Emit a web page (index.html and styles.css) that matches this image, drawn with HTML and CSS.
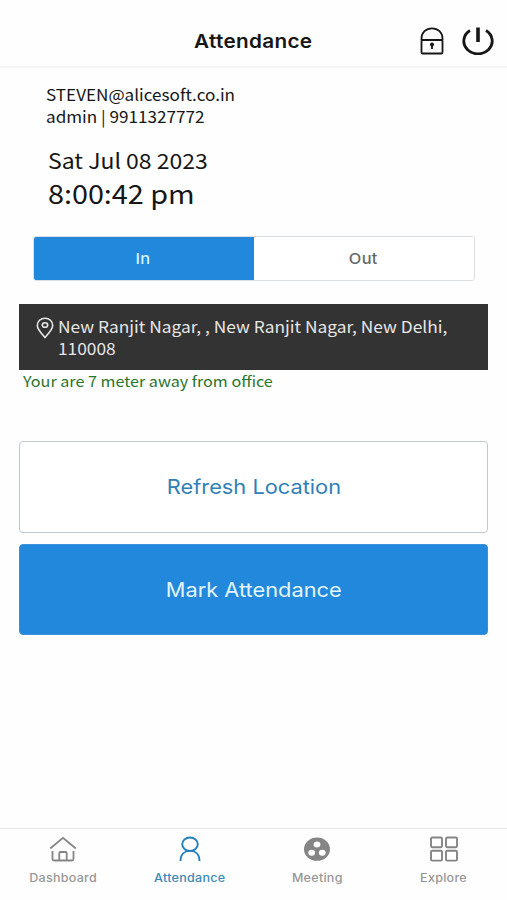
FILE: index.html
```html
<!DOCTYPE html>
<html lang="en">
<head>
  <meta charset="UTF-8">
  <meta name="viewport" content="width=device-width, initial-scale=1.0">
  <title>Attendance</title>
  <link rel="stylesheet" href="styles.css">
</head>
<body>
  <header class="topbar">
    <h1>Attendance</h1>
    <div class="actions">
      <svg class="lock" viewBox="0 0 24 28" fill="none" stroke="#161616" stroke-width="1.8">
        <path d="M1.5 13V11.5C1.5 5.5 6 1.3 12 1.3S22.5 5.5 22.5 11.5V13"/>
        <rect x="1.5" y="13" width="21" height="13.5" rx="1"/>
        <circle cx="12" cy="17.5" r="2" fill="#161616" stroke="none"/>
        <path d="M12 17.5V22"/>
      </svg>
      <svg class="power" viewBox="0 0 32 28" fill="none" stroke="#161616" stroke-width="2.8">
        <path d="M8 3.5A14.2 12.8 0 1 0 24 3.5"/>
        <path d="M16 0.5V15" stroke-width="3.6"/>
      </svg>
    </div>
  </header>

  <main>
    <div class="user">
      <p>STEVEN@alicesoft.co.in</p>
      <p>admin | 9911327772</p>
    </div>
    <p class="date">Sat Jul 08 2023</p>
    <p class="time">8:00:42 pm</p>

    <div class="segment">
      <button class="active"><span>In</span></button>
      <button><span>Out</span></button>
    </div>

    <div class="location">
      <svg class="pin" viewBox="0 0 18 22" fill="none" stroke="#e6e6e6" stroke-width="1.6">
        <path d="M9 20.5C6 17 1.3 12.5 1.3 8.5C1.3 4.3 4.6 1.2 9 1.2S16.7 4.3 16.7 8.5C16.7 12.5 12 17 9 20.5Z"/>
        <ellipse cx="9" cy="8" rx="2.7" ry="2.3"/>
      </svg>
      <p>New Ranjit Nagar, , New Ranjit Nagar, New Delhi, 110008</p>
    </div>
    <p class="distance">Your are 7 meter away from office</p>

    <button class="btn outline"><span>Refresh Location</span></button>
    <button class="btn solid"><span>Mark Attendance</span></button>
  </main>

  <nav class="tabs">
    <a class="tab">
      <svg viewBox="0 0 28 26" fill="none" stroke="#858585" stroke-width="1.8">
        <path d="M1.2 12.5L14 1.8L26.8 12.5"/>
        <path d="M3.5 15V23Q3.5 24.5 5 24.5H23Q24.5 24.5 24.5 23V15M10.3 24.5V17Q10.3 16 11.3 16H16.7Q17.7 16 17.7 17V24.5"/>
      </svg>
      <span>Dashboard</span>
    </a>
    <a class="tab current">
      <svg viewBox="0 0 28 26" fill="none" stroke="#2580bd" stroke-width="1.9">
        <ellipse cx="14" cy="8.2" rx="7.8" ry="6.7"/>
        <path d="M4.5 25C4.5 18.5 8.5 14.9 14 14.9S23.5 18.5 23.5 25"/>
      </svg>
      <span>Attendance</span>
    </a>
    <a class="tab">
      <svg viewBox="0 0 28 26">
        <ellipse cx="14" cy="13.2" rx="13" ry="11.6" fill="#858585"/>
        <g fill="#fff">
          <ellipse cx="14" cy="8.5" rx="3.4" ry="3"/>
          <ellipse cx="8.7" cy="16.7" rx="3.4" ry="3"/>
          <ellipse cx="19.3" cy="16.7" rx="3.4" ry="3"/>
        </g>
      </svg>
      <span>Meeting</span>
    </a>
    <a class="tab">
      <svg viewBox="0 0 28 26" fill="none" stroke="#858585" stroke-width="1.9">
        <rect x="1" y="1.5" width="11" height="9.8" rx="1.2"/>
        <rect x="16" y="1.5" width="11" height="9.8" rx="1.2"/>
        <rect x="1" y="14.8" width="11" height="9.8" rx="1.2"/>
        <rect x="16" y="14.8" width="11" height="9.8" rx="1.2"/>
      </svg>
      <span>Explore</span>
    </a>
  </nav>
</body>
</html>
```
FILE: styles.css
```css
* {
  box-sizing: border-box;
}
body {
  margin: 0;
  height: 900px;
  display: flex;
  flex-direction: column;
  background: #fefefe;
  color: #161616;
  font-family: "Noto Sans CJK SC", sans-serif;
  overflow: hidden;
}
h1, p {
  margin: 0;
}
button {
  font-family: Inter, sans-serif;
  padding: 0;
}
svg {
  display: block;
}
/* slightly extended lettering */
main p {
  width: fit-content;
  transform: scaleX(1.083);
  transform-origin: left;
}
h1, button span, .tab span {
  display: inline-block;
  transform: scaleX(1.09);
}
.topbar {
  display: grid;
  grid-template-columns: 1fr auto 1fr;
  align-items: center;
  height: 68px;
  padding: 15px 13px 0;
  border-bottom: 2px solid #f5f5f5;
}
.topbar h1 {
  grid-column: 2;
  padding-top: 3px;
  font: 600 19px/24px Inter, sans-serif;
  letter-spacing: 0.3px;
}
.actions {
  display: flex;
  justify-content: flex-end;
  gap: 18px;
}
.lock {
  width: 24px;
  height: 28px;
}
.power {
  width: 32px;
  height: 28px;
}
main {
  flex: 1;
  padding: 16px 19px 0;
}
.user {
  margin-left: 27px;
  font-size: 15.8px;
  line-height: 21.5px;
}
main .date {
  margin: 17px 0 0 29px;
  font-size: 21px;
  line-height: 32px;
  transform: scaleX(1.095);
}
main .time {
  margin-left: 29px;
  font-size: 26px;
  line-height: 33px;
  transform: scaleX(1.105);
}
.segment {
  display: flex;
  height: 45px;
  margin: 27px 13px 0 14px;
  border: 1px solid #dcdfe1;
  border-radius: 3px;
  overflow: hidden;
}
.segment button {
  flex: 1;
  border: 0;
  padding-right: 2px;
  background: #fff;
  color: #666;
  font-size: 15px;
  font-weight: 500;
  letter-spacing: 0.3px;
}
.segment .active {
  background: #2288dc;
  color: #d5f3fc;
}
.location {
  display: flex;
  height: 66px;
  margin-top: 23px;
  padding: 12px 40px 0 17px;
  gap: 4px;
  background: #333;
  color: #e6e6e6;
  font-size: 16px;
  line-height: 21.5px;
}
.pin {
  flex: none;
  width: 18px;
  height: 22px;
  margin-top: 1px;
}
.distance {
  margin-left: 4px;
  color: #28752b;
  font-size: 14.9px;
  line-height: 22px;
}
.btn {
  display: block;
  width: 100%;
  height: 92px;
  border-radius: 4px;
  font-size: 20px;
}
.outline {
  margin-top: 49px;
  border: 1px solid #c0cad0;
  background: #fff;
  color: #3080b8;
}
.solid {
  height: 91px;
  margin-top: 11px;
  border: 1px solid #3a90da;
  background: #2288dc;
  color: #e2f6ff;
}
.tabs {
  display: grid;
  grid-template-columns: repeat(4, 1fr);
  height: 72px;
  padding-top: 7px;
  border-top: 1px solid #e6e6e6;
}
.tab {
  display: flex;
  flex-direction: column;
  align-items: center;
  gap: 7px;
  color: #969696;
  font: 500 11.5px/18px Inter, sans-serif;
  letter-spacing: 0.25px;
}
.tab svg {
  width: 28px;
  height: 26px;
}
.current {
  color: #3a88b8;
}
```
